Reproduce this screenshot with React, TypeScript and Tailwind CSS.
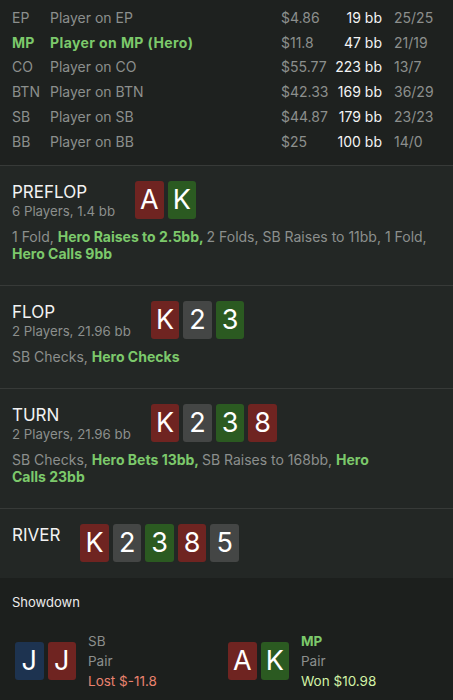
import React from "react";

type Suit = "h" | "c" | "s" | "d";

const SUIT_BG: Record<Suit, string> = {
  h: "bg-[#6f2421]",
  c: "bg-[#2b5a21]",
  s: "bg-[#444645]",
  d: "bg-[#1d3350]",
};

const PLAYERS = [
  { pos: "EP", name: "Player on EP", stack: "$4.86", bb: "19 bb", stats: "25/25" },
  { pos: "MP", name: "Player on MP (Hero)", stack: "$11.8", bb: "47 bb", stats: "21/19", hero: true },
  { pos: "CO", name: "Player on CO", stack: "$55.77", bb: "223 bb", stats: "13/7" },
  { pos: "BTN", name: "Player on BTN", stack: "$42.33", bb: "169 bb", stats: "36/29" },
  { pos: "SB", name: "Player on SB", stack: "$44.87", bb: "179 bb", stats: "23/23" },
  { pos: "BB", name: "Player on BB", stack: "$25", bb: "100 bb", stats: "14/0" },
];

type Action = { text: string; hero?: boolean };

const STREETS: {
  name: string;
  info?: string;
  cards: [string, Suit][];
  actions?: Action[];
}[] = [
  {
    name: "PREFLOP",
    info: "6 Players, 1.4 bb",
    cards: [
      ["A", "h"],
      ["K", "c"],
    ],
    actions: [
      { text: "1 Fold, " },
      { text: "Hero Raises to 2.5bb, ", hero: true },
      { text: "2 Folds, SB Raises to 11bb, 1 Fold, " },
      { text: "Hero Calls 9bb", hero: true },
    ],
  },
  {
    name: "FLOP",
    info: "2 Players, 21.96 bb",
    cards: [
      ["K", "h"],
      ["2", "s"],
      ["3", "c"],
    ],
    actions: [{ text: "SB Checks, " }, { text: "Hero Checks", hero: true }],
  },
  {
    name: "TURN",
    info: "2 Players, 21.96 bb",
    cards: [
      ["K", "h"],
      ["2", "s"],
      ["3", "c"],
      ["8", "h"],
    ],
    actions: [
      { text: "SB Checks, " },
      { text: "Hero Bets 13bb, ", hero: true },
      { text: "SB Raises to 168bb, " },
      { text: "Hero Calls\u00a023bb", hero: true },
    ],
  },
  {
    name: "RIVER",
    cards: [
      ["K", "h"],
      ["2", "s"],
      ["3", "c"],
      ["8", "h"],
      ["5", "s"],
    ],
  },
];

function Card({ rank, suit }: { rank: string; suit: Suit }) {
  return (
    <div
      className={`flex h-[38px] w-[28.5px] items-center justify-center rounded-[3px] text-[27px] leading-none text-white ${SUIT_BG[suit]}`}
    >
      {rank}
    </div>
  );
}

export default function App() {
  return (
    <div
      className="w-[453px] h-[700px] overflow-hidden bg-[#1c1f1d] text-[14px]"
      style={{ fontFamily: "Inter, 'Noto Sans', sans-serif" }}
    >
      {/* players */}
      <div className="bg-[#1e211f] pl-3 pt-[5px] pb-[11px]">
        {PLAYERS.map((p) => (
          <div key={p.pos} className="flex h-[24.8px] items-center whitespace-nowrap">
            <div
              className={`w-[38px] ${p.hero ? "font-bold tracking-[0.3px] text-[#7cc96b]" : "text-[#8c8f8d]"}`}
            >
              {p.pos}
            </div>
            <div
              className={`w-[231px] ${p.hero ? "font-bold tracking-[0.4px] text-[#7cc96b]" : "text-[#8c8f8d]"}`}
            >
              {p.name}
            </div>
            <div className="w-[45px] text-[#8c8f8d]">{p.stack}</div>
            <div className="w-[56px] text-right text-[#f4f4f4]">{p.bb}</div>
            <div className="ml-3 text-[#8c8f8d]">{p.stats}</div>
          </div>
        ))}
      </div>

      {/* streets */}
      {STREETS.map((s) => (
        <div
          key={s.name}
          className="border-t border-[#373a38] bg-[#232725] pl-3 pr-3 pt-[15px] pb-4"
        >
          <div className="flex items-start gap-5">
            <div>
              <div className="text-[17px] leading-[22px] text-[#f2f2f2]">{s.name}</div>
              {s.info && (
                <div className="text-[13.25px] leading-[16px] text-[#8c8f8d]">{s.info}</div>
              )}
            </div>
            <div className="flex gap-1">
              {s.cards.map(([r, su], i) => (
                <Card key={i} rank={r} suit={su} />
              ))}
            </div>
          </div>
          {s.actions && (
            <div className="mt-[9px] pb-[7px] text-[14px] leading-[17px] text-[#8c8f8d]">
              {s.actions.map((a, i) =>
                a.hero ? (
                  <span key={i} className="font-bold text-[#7cc96b]">
                    {a.text}
                  </span>
                ) : (
                  <span key={i}>{a.text}</span>
                )
              )}
            </div>
          )}
        </div>
      ))}

      {/* showdown */}
      <div className="pl-[15px] pr-3 pt-[15px]">
        <div className="-ml-[3px] text-[13px] leading-[18px] text-[#ececec]">Showdown</div>
        <div className="mt-5 grid grid-cols-2">
          <div className="flex items-center gap-3">
            <div className="flex gap-1">
              <Card rank="J" suit="d" />
              <Card rank="J" suit="h" />
            </div>
            <div className="text-[13.5px] leading-[20px]">
              <div className="text-[#8c8f8d]">SB</div>
              <div className="text-[#8c8f8d]">Pair</div>
              <div className="text-[#e8826f]">Lost $-11.8</div>
            </div>
          </div>
          <div className="flex items-center gap-3">
            <div className="flex gap-1">
              <Card rank="A" suit="h" />
              <Card rank="K" suit="c" />
            </div>
            <div className="text-[13.5px] leading-[20px]">
              <div className="font-bold text-[#7cc96b]">MP</div>
              <div className="text-[#8c8f8d]">Pair</div>
              <div className="text-[#d2f2a6]">Won $10.98</div>
            </div>
          </div>
        </div>
      </div>
    </div>
  );
}
